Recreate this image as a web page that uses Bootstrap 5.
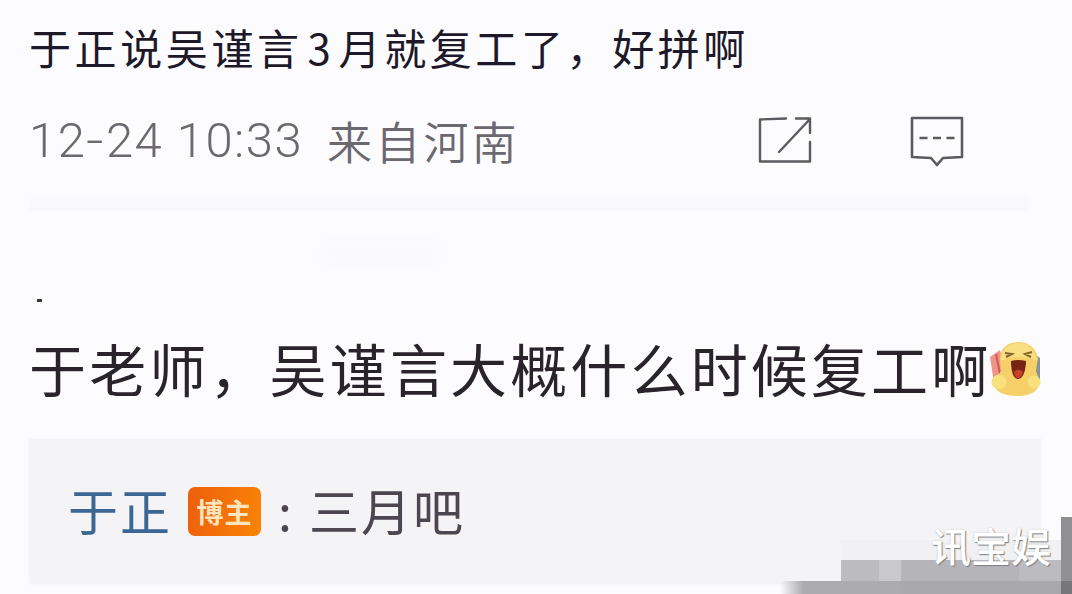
<!DOCTYPE html>
<html lang="zh-CN">
<head>
    <meta charset="UTF-8">
    <meta name="viewport" content="width=device-width, initial-scale=1.0">
    <title>微博评论</title>
    <link href="https://cdn.jsdelivr.net/npm/bootstrap@5.3.0/dist/css/bootstrap.min.css" rel="stylesheet">
    <script src="https://cdn.jsdelivr.net/npm/bootstrap@5.3.0/dist/js/bootstrap.bundle.min.js"></script>
    <style>
        body {
            background-color: #fcfcff;
            font-family: "Noto Sans CJK SC", sans-serif;
            height: 594px;
            overflow: hidden;
            white-space: nowrap;
        }
        .feed { padding-left: 29px; }
        .post-text {
            height: 62px;
            margin-top: 16px;
            font-size: 42px;
            line-height: 62px;
            letter-spacing: 3.6px;
            color: #1d1928;
        }
        .post-text .num { margin: 0 4px 0 5px; }
        .post-meta {
            height: 64px;
            margin-top: 31px;
            color: #6b6870;
        }
        .post-actions {
            gap: 96px;
            margin-right: 107px;
        }
        .post-time {
            width: 274px;
            font-family: Roboto, sans-serif;
            font-size: 49px;
            font-weight: 300;
            line-height: 64px;
            letter-spacing: 1.5px;
        }
        .post-time .dash {
            display: inline-block;
            margin: 0 2px;
            transform: scaleX(1.25);
        }
        .post-place {
            margin-left: 24px;
            font-size: 45px;
            font-weight: 350;
            line-height: 60px;
            letter-spacing: 3.2px;
        }
        .divider {
            height: 15px;
            margin-top: 23px;
            width: 1000px;
            background: linear-gradient(#fbfbfe, #f8f8fc 60%, #fafafd);
            filter: blur(1px);
        }
        .smudge {
            width: 114px;
            height: 20px;
            margin: 32px 0 0 295px;
            background-color: #f9f9fc;
            filter: blur(4px);
        }
        .tiny-dot {
            width: 5px;
            height: 3px;
            margin: 36px 0 0 8px;
            background-color: #3a363e;
        }
        .comment-text {
            height: 84px;
            margin-top: 23px;
            font-size: 57px;
            line-height: 84px;
            letter-spacing: 3.15px;
            color: #29232c;
        }
        .comment-text svg { margin: 4px 0 0 -2px; }
        .reply-box {
            width: 1012px;
            height: 145px;
            margin-top: 30px;
            padding-left: 39px;
            background-color: #f4f4f7;
            box-shadow: 0 0 5px #f6f6f9;
            font-size: 50px;
            line-height: 72px;
            letter-spacing: 2px;
            color: #4b4650;
        }
        .reply-name, .reply-text { margin-bottom: 5px; }
        .reply-name { color: #3c6795; }
        .author-tag {
            width: 73px;
            height: 49px;
            margin-left: 16px;
            border-radius: 7px;
            background: linear-gradient(100deg, #ee5f0c, #f98407);
            color: #ffe5bd;
            font-size: 27px;
            font-weight: 700;
            letter-spacing: 1px;
        }
        .reply-colon {
            width: 31px;
            margin: 0 0 5px 17px;
        }
        .mosaic {
            right: 0;
            bottom: 0;
            width: 292px;
            height: 77px;
        }
        .watermark {
            right: 21px;
            bottom: 19px;
            font-size: 40px;
            line-height: 60px;
            font-weight: 500;
            color: #fff;
            text-shadow: 1px 1px 1px #7e7e82, 0 0 2px #c4c4c8;
        }
    </style>
</head>
<body>
    <main class="feed d-flex flex-column">
        <div class="post-text">于正说吴谨言<span class="num">3</span>月就复工了，好拼啊</div>

        <div class="post-meta d-flex align-items-center">
            <span class="post-time">12<span class="dash">-</span>24 10:33</span>
            <span class="post-place">来自河南</span>
            <div class="post-actions d-flex ms-auto">
                <!-- share -->
                <svg width="56" height="54" viewBox="0 0 56 54" fill="none" stroke="#5c5960" stroke-width="2.4" stroke-linejoin="round" stroke-linecap="round">
                    <path d="M29 4.500 3 5.500V47.500H53V28M39 4.500H53V19M53 5 22 38"/>
                </svg>
                <!-- comment -->
                <svg width="56" height="54" viewBox="0 0 56 54" fill="none" stroke="#5c5960" stroke-width="2.6" stroke-linejoin="round">
                    <path d="M3 4H53V43L34 44 28 51 22 44 3 43Z"/>
                    <path d="M10.500 24h8M24 24h8M37.500 24h8" stroke-width="2.500"/>
                </svg>
            </div>
        </div>

        <div class="divider"></div>
        <div class="smudge"></div>
        <div class="tiny-dot"></div>

        <div class="comment-text d-flex align-items-center">
            <span>于老师，吴谨言大概什么时候复工啊</span>
            <!-- cheering face -->
            <svg width="52" height="56" viewBox="0 0 52 56">
                <path d="M1 16 11 9 19 38 5 42Z" fill="#ef9389"/>
                <path d="M7 13 12 38" stroke="#cf5d55" stroke-width="2"/>
                <path d="M42 10 51 17 51 38 42 38Z" fill="#869399"/>
                <path d="M30 1C18 1 10 8 11 20L12 30 4 42C6 52 17 55 29 55 41 55 50 50 51 41L47 30 49 17C47 7 39 1 30 1Z" fill="#f6cf69"/>
                <path d="M30 2C19 2 12 9 12 20 20 15 41 15 48 20 46 8 39 2 30 2Z" fill="#f7df82"/>
                <path d="M16 12 23 13 17 16M43 11 36 13 42 16" fill="none" stroke="#85632a" stroke-width="2"/>
                <path d="M22 20Q29 18 37 20C37 29 34 38 29 38 24 38 22 29 22 20Z" fill="#772415"/>
                <path d="M25 31Q29 26 34 31 32 37 29 37 26 37 25 31Z" fill="#c64327"/>
                <circle cx="10" cy="41" r="7.500" fill="#f8e07e"/>
                <circle cx="45" cy="41" r="6.500" fill="#f8e07e"/>
            </svg>
        </div>

        <div class="reply-box d-flex align-items-center">
            <span class="reply-name">于正</span>
            <span class="author-tag d-flex align-items-center justify-content-center">博主</span>
            <span class="reply-colon">:</span>
            <span class="reply-text">三月吧</span>
        </div>
    </main>

    <!-- pixelated corner with the channel mark over it -->
    <svg class="mosaic position-absolute" viewBox="0 0 292 77" shape-rendering="crispEdges">
        <defs>
            <linearGradient id="fade">
                <stop offset="0" stop-color="#acacaf" stop-opacity="0"/>
                <stop offset=".08" stop-color="#acacaf"/>
            </linearGradient>
        </defs>
        <path d="M61 23H281V43H61Z" fill="#f1f1f3"/>
        <path d="M61 43H281V64H61Z" fill="#bcbcc0"/>
        <path d="M99 43H121V64H99Z" fill="#c9c9cd"/>
        <path d="M121 43H239V64H121Z" fill="#b4b4b9"/>
        <path d="M0 64H292V77H0Z" fill="url(#fade)"/>
        <path d="M120 64H281V77H120Z" fill="#a9a9ac"/>
        <path d="M281 0H292V77H281Z" fill="#909094"/>
        <path d="M281 64H292V77H281Z" fill="#77777b"/>
    </svg>
    <div class="watermark position-absolute">讯宝娱</div>
</body>
</html>
